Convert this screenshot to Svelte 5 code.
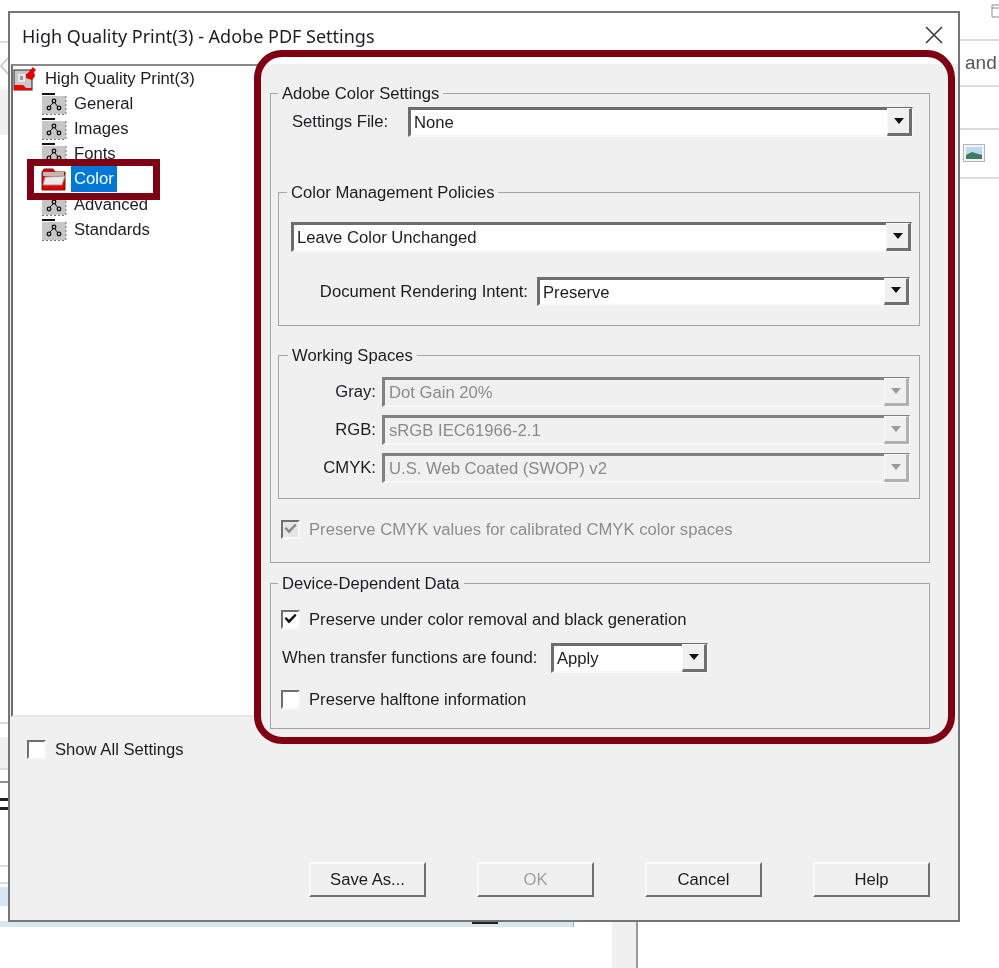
<script lang="ts">
  const tree = [
    { label: 'General', selected: false },
    { label: 'Images', selected: false },
    { label: 'Fonts', selected: false },
    { label: 'Color', selected: true },
    { label: 'Advanced', selected: false },
    { label: 'Standards', selected: false }
  ];
  const spaces = [
    { label: 'Gray:', value: 'Dot Gain 20%' },
    { label: 'RGB:', value: 'sRGB IEC61966-2.1' },
    { label: 'CMYK:', value: 'U.S. Web Coated (SWOP) v2' }
  ];
  const buttons = [
    { label: 'Save As...', disabled: false },
    { label: 'OK', disabled: true },
    { label: 'Cancel', disabled: false },
    { label: 'Help', disabled: false }
  ];
</script>

{#snippet arrow(disabled = false)}
  <span class="arrow" class:off={disabled}>
    <svg width="12" height="7" viewBox="0 0 12 7"><path d="M1 0h10L6 6z" fill="currentColor" /></svg>
  </span>
{/snippet}

{#snippet check(kind = 'none')}
  <span class="box" class:off={kind === 'off'}>
    {#if kind !== 'none'}
      <svg width="15" height="15" viewBox="0 0 15 15">
        <path d="M1.5 6.5l1.6-1.6 2.9 2.9 6-6 1.5 1.6-7.5 8z" fill="currentColor" />
      </svg>
    {/if}
  </span>
{/snippet}

<div class="screen">
  <!-- bits of the app behind the dialog -->
  <div class="behind">
    <i class="b-line" style="left:0;top:41px;width:9px"></i>
    <i class="b-band" style="left:0;top:90px;width:9px;height:45px"></i>
    <i class="b-band" style="left:0;top:737px;width:9px;height:31px"></i>
    <i class="b-line" style="left:0;top:722px;width:9px"></i>
    <i class="b-line" style="left:0;top:768px;width:9px"></i>
    <i class="b-line dark" style="left:0;top:781px;width:9px"></i>
    <i class="b-dark" style="left:0;top:798px;width:9px"></i>
    <i class="b-dark" style="left:0;top:807px;width:9px"></i>
    <i class="b-line" style="left:0;top:865px;width:9px"></i>
    <i class="b-line" style="left:0;top:882px;width:9px"></i>
    <i class="b-blue" style="left:0;top:887px;width:9px;height:19px"></i>
    <i class="b-blue" style="left:0;top:921px;width:573px;height:6px"></i>
    <i class="b-vline thin" style="left:573px;top:921px;height:6px"></i>
    <i class="b-dark" style="left:472px;top:921px;width:26px"></i>
    <i class="b-band" style="left:612px;top:921px;width:24px;height:47px"></i>
    <i class="b-vline" style="left:636px;top:921px;height:47px"></i>
    <i class="b-line" style="left:960px;top:39px;width:39px"></i>
    <i class="b-line" style="left:960px;top:85px;width:39px"></i>
    <i class="b-line" style="left:960px;top:128px;width:39px"></i>
    <i class="b-line" style="left:960px;top:177px;width:39px"></i>
    <svg class="b-chevron" width="9" height="18" viewBox="0 0 9 18">
      <path d="M8 1L1 9l7 8" fill="none" stroke="#c4c4c4" stroke-width="1.5" />
    </svg>
    <span class="b-and">and</span>
    <svg class="b-pic" width="22" height="18" viewBox="0 0 22 18">
      <rect x=".5" y=".5" width="21" height="17" fill="#f4f4f4" stroke="#b5b5b5" />
      <rect x="3" y="3" width="16" height="12" fill="#bcd9ee" />
      <path d="M3 11l6-3 10 3v4H3z" fill="#3f7a63" />
    </svg>
    <svg class="b-bag" width="10" height="16" viewBox="0 0 10 16">
      <path d="M10 4H3v9h7M3 4V1h7" fill="none" stroke="#8a8a8a" />
    </svg>
  </div>

  <div class="dialog">
    <header class="titlebar">
      <span class="title">High Quality Print(3) - Adobe PDF Settings</span>
      <svg class="close" width="18" height="18" viewBox="0 0 18 18">
        <path d="M1 1l16 16M17 1L1 17" stroke="#333" stroke-width="1.5" fill="none" />
      </svg>
    </header>

    <div class="main">
      <nav class="tree">
        <div class="node root">
          <svg width="24" height="25" viewBox="0 0 24 25">
            <rect x="1" y="4" width="18" height="20" fill="#c9c9c9" stroke="#222" />
            <path d="M1 24v-5h9l3 3h6v2z" fill="#f00000" />
            <path d="M13 8c3-1 4-4 7-7l3 3-2 2 1 4-3 4-6-2z" fill="#e00000" />
            <path d="M5 8h7v8H5z" fill="#e8e8e8" />
            <path d="M7 10h3v4H7z" fill="#999" />
          </svg>
          <span>High Quality Print(3)</span>
        </div>
        {#each tree as item}
          <div class="node">
            {#if item.selected}
              <svg width="26" height="24" viewBox="0 0 26 24">
                <path d="M1 5l2-3h9l2 3h10v18H1z" fill="#e00000" stroke="#701818" />
                <path d="M2 5h21v4H2z" fill="#c8b4b4" />
                <path d="M4 10l20-1-3 9H2z" fill="#e9e9e9" stroke="#a89090" />
              </svg>
            {:else}
              <svg width="26" height="24" viewBox="0 0 26 24">
                <rect x="1" y="1" width="13" height="2" fill="#111" />
                <rect x="1" y="4" width="24" height="18" fill="#c6c6c6" />
                <path d="M1 22.5h24M25 4v18" stroke="#777" stroke-dasharray="2 2" />
                <circle cx="13" cy="9" r="1.8" fill="none" stroke="#111" stroke-width="1.3" />
                <circle cx="8" cy="16" r="1.8" fill="none" stroke="#111" stroke-width="1.3" />
                <circle cx="18" cy="16" r="1.8" fill="none" stroke="#111" stroke-width="1.3" />
                <path d="M12 11l-3 3M14 11l3 4" stroke="#111" />
              </svg>
            {/if}
            <span class:selected={item.selected}>{item.label}</span>
          </div>
        {/each}
      </nav>

      <section class="settings">
        <fieldset class="group outer color-settings">
          <legend>Adobe Color Settings</legend>
          <div class="file-row">
            <span class="file-label">Settings File:</span>
            <div class="combo grow">None {@render arrow()}</div>
          </div>

          <fieldset class="group policies">
            <legend>Color Management Policies</legend>
            <div class="combo full">Leave Color Unchanged {@render arrow()}</div>
            <div class="intent-row">
              <span>Document Rendering Intent:</span>
              <div class="combo intent">Preserve {@render arrow()}</div>
            </div>
          </fieldset>

          <fieldset class="group spaces">
            <legend>Working Spaces</legend>
            <div class="space-grid">
              {#each spaces as space}
                <span class="space-label">{space.label}</span>
                <div class="combo disabled">{space.value} {@render arrow(true)}</div>
              {/each}
            </div>
          </fieldset>

          <div class="checkline cmyk">
            {@render check('off')}
            <span class="muted">Preserve CMYK values for calibrated CMYK color spaces</span>
          </div>
        </fieldset>

        <fieldset class="group outer device">
          <legend>Device-Dependent Data</legend>
          <div class="checkline">
            {@render check('on')}
            <span>Preserve under color removal and black generation</span>
          </div>
          <div class="transfer-row">
            <span class="transfer-label">When transfer functions are found:</span>
            <div class="combo transfer">Apply {@render arrow()}</div>
          </div>
          <div class="checkline halftone">
            {@render check()}
            <span>Preserve halftone information</span>
          </div>
        </fieldset>
      </section>
    </div>

    <footer class="footer">
      <div class="checkline show-all">
        {@render check()}
        <span>Show All Settings</span>
      </div>
      <div class="actions">
        {#each buttons as button}
          <button class:disabled={button.disabled}>{button.label}</button>
        {/each}
      </div>
    </footer>

    <div class="callout panel"></div>
    <div class="callout item"></div>
  </div>
</div>

<style>
  :global(body) {
    margin: 0;
    background: #fff;
  }

  .screen {
    position: relative;
    width: 999px;
    height: 968px;
    overflow: hidden;
    background: #fff;
    font-family: "Liberation Sans", Arial, sans-serif;
    font-size: 16.65px;
    color: #1c1c22;
    filter: blur(0.45px);
  }

  .behind i {
    position: absolute;
    display: block;
  }
  .b-line {
    height: 2px;
    background: #dcdcdc;
  }
  .b-line.dark {
    background: #8f8f8f;
  }
  .b-band {
    background: #f0f0f0;
  }
  .b-dark {
    height: 3px;
    background: #222;
  }
  .b-blue {
    background: #d7e6f1;
  }
  .b-vline {
    width: 2px;
    background: #9a9a9a;
  }
  .b-vline.thin {
    width: 1px;
    background: #8fb0c8;
  }
  .b-chevron {
    position: absolute;
    left: 0;
    top: 57px;
  }
  .b-and {
    position: absolute;
    left: 965px;
    top: 52px;
    font-size: 19px;
    color: #555;
  }
  .b-pic {
    position: absolute;
    left: 963px;
    top: 144px;
  }
  .b-bag {
    position: absolute;
    left: 989px;
    top: 4px;
  }

  .dialog {
    position: absolute;
    left: 8px;
    top: 11px;
    width: 952px;
    height: 911px;
    box-sizing: border-box;
    display: flex;
    flex-direction: column;
    background: #f0f0f0;
    border: 2px solid #767676;
  }

  .titlebar {
    height: 51px;
    flex: none;
    display: flex;
    align-items: center;
    justify-content: space-between;
    box-sizing: border-box;
    padding: 0 15px 5px 12px;
    background: #fff;
  }
  .title {
    font-family: "Noto Sans", sans-serif;
    font-size: 18px;
  }
  .close {
    margin-top: -3px;
  }

  .main {
    height: 653px;
    flex: none;
    display: flex;
  }

  .tree {
    width: 250px;
    flex: none;
    box-sizing: border-box;
    background: #fff;
    border-left: 2px solid #6e6e6e;
    border-top: 2px solid #8a8a8a;
    border-bottom: 2px solid #e8e8e8;
    padding: 0 0 0 28px;
    margin-left: 1px;
  }
  .node {
    height: 25.2px;
    display: flex;
    align-items: center;
    gap: 7px;
  }
  .root {
    margin-left: -28px;
    gap: 8px;
    white-space: nowrap;
  }
  .selected {
    background: #0078d7;
    color: #fff;
    padding: 3px 3px;
    margin-left: -3px;
  }

  .settings {
    flex: 1;
    box-sizing: border-box;
    padding: 19px 28px 0 9px;
    display: flex;
    flex-direction: column;
    gap: 10px;
  }

  .group {
    margin: 0;
    min-width: 0;
    flex: none;
    box-sizing: border-box;
    border: 1px solid #a4a4a4;
  }
  .group legend {
    height: 20px;
    line-height: 21px;
    padding: 0 4px;
    margin-left: 0;
    white-space: nowrap;
  }

  .color-settings {
    height: 480px;
    padding: 4px 9px 0 7px;
  }
  .file-row {
    display: flex;
    align-items: center;
    padding-left: 14px;
    margin-right: 7px;
  }
  .file-label {
    width: 116px;
    flex: none;
  }

  .combo {
    position: relative;
    box-sizing: border-box;
    height: 30px;
    line-height: 25px;
    padding-left: 3px;
    background: #fff;
    border-style: solid;
    border-width: 3px 2px 2px 3px;
    border-color: #6d6d6d #f8f8f8 #f8f8f8 #6d6d6d;
    white-space: nowrap;
  }
  .combo.grow {
    flex: 1;
  }
  .arrow {
    position: absolute;
    right: -1px;
    top: -2px;
    bottom: -1px;
    width: 25px;
    box-sizing: border-box;
    display: flex;
    align-items: center;
    justify-content: center;
    background: #f0f0f0;
    color: #111;
    border-style: solid;
    border-width: 1px 3px 3px 1px;
    border-color: #f9f9f9 #6f6f6f #6f6f6f #f9f9f9;
  }
  .arrow.off {
    color: #9a9a9a;
    border-color: #f9f9f9 #b0b0b0 #b0b0b0 #f9f9f9;
  }
  .combo.disabled {
    background: #f0f0f0;
    color: #8a8a8a;
    padding-left: 4px;
    border-color: #808080 #f8f8f8 #f8f8f8 #808080;
  }

  .policies {
    height: 144px;
    margin-top: 45px;
    padding: 20px 7px 0 12px;
  }
  .policies legend {
    margin-left: -4px;
  }
  .combo.full {
    width: 100%;
  }
  .intent-row {
    display: flex;
    justify-content: flex-end;
    align-items: center;
    gap: 9px;
    margin-top: 25px;
    padding-right: 2px;
  }
  .combo.intent {
    width: 373px;
    height: 29px;
  }

  .spaces {
    height: 154px;
    margin-top: 19px;
    padding: 12px 9px 0 0;
  }
  .spaces legend {
    margin-left: 9px;
  }
  .space-grid {
    display: grid;
    grid-template-columns: 97px 1fr;
    column-gap: 6px;
    row-gap: 8px;
    align-items: center;
  }
  .space-label {
    text-align: right;
  }

  .checkline {
    display: flex;
    align-items: center;
    gap: 9px;
    height: 19px;
    white-space: nowrap;
  }
  .box {
    width: 19px;
    height: 19px;
    flex: none;
    box-sizing: border-box;
    display: flex;
    align-items: center;
    justify-content: center;
    background: #fff;
    color: #111;
    border: 2px solid;
    border-color: #6f6f6f #f9f9f9 #f9f9f9 #6f6f6f;
  }
  .box.off {
    background: #e6e6e6;
    color: #8a8a8a;
  }
  .muted {
    color: #8d8d8d;
  }
  .cmyk {
    margin: 21px 0 0 3px;
  }

  .device {
    height: 156px;
    padding: 17px 9px 0 7px;
  }
  .device .checkline {
    margin-left: 3px;
  }
  .transfer-row {
    display: flex;
    align-items: center;
    margin: 14px 0 0 4px;
  }
  .transfer-label {
    width: 269px;
    flex: none;
    white-space: nowrap;
  }
  .combo.transfer {
    width: 157px;
  }
  .device .halftone {
    margin-top: 17px;
  }

  .footer {
    flex: 1;
    box-sizing: border-box;
    display: flex;
    flex-direction: column;
    justify-content: space-between;
    padding: 23px 28px 23px 17px;
  }
  .actions {
    display: flex;
    justify-content: flex-end;
    gap: 51px;
  }
  button {
    width: 117px;
    height: 35px;
    padding: 0;
    font: inherit;
    color: inherit;
    background: #f0f0f0;
    border: 2px solid;
    border-color: #fbfbfb #6f6f6f #6f6f6f #fbfbfb;
  }
  button.disabled {
    color: #a0a0a0;
  }

  .callout {
    position: absolute;
    box-sizing: border-box;
    border: 7px solid #7f0012;
    pointer-events: none;
  }
  .callout.panel {
    left: 244px;
    top: 37px;
    width: 701px;
    height: 694px;
    border-radius: 28px;
  }
  .callout.item {
    left: 17px;
    top: 146px;
    width: 133px;
    height: 41px;
  }
</style>
